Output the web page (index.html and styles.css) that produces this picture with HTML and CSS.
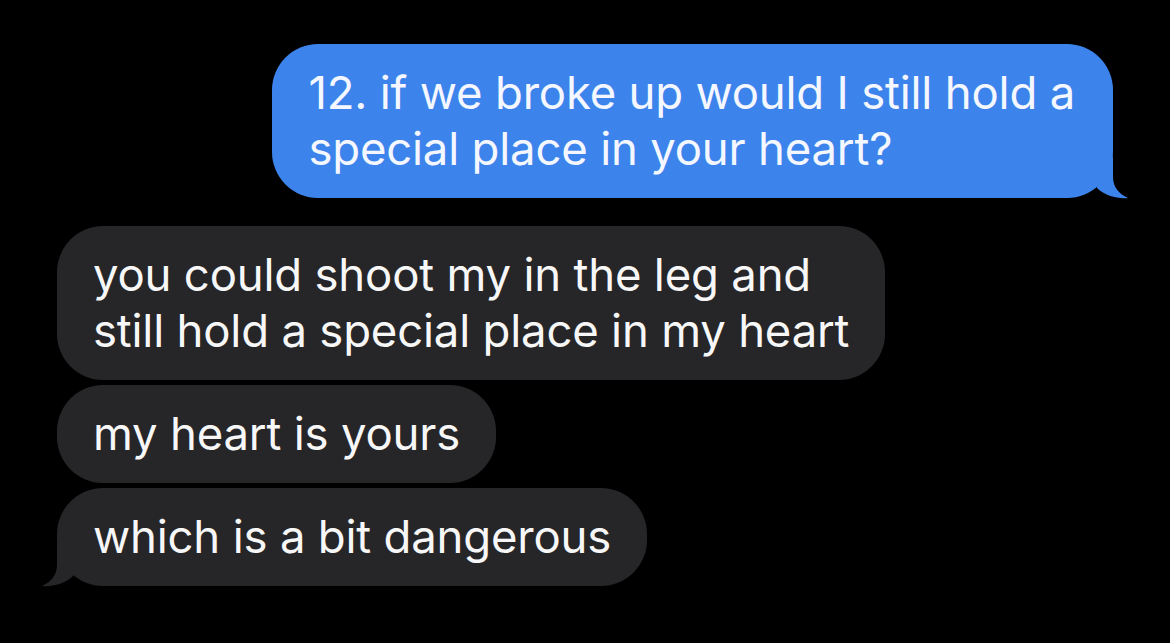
FILE: index.html
```html
<!DOCTYPE html>
<html>
<head>
<meta charset="utf-8">
<link rel="stylesheet" href="styles.css">
</head>
<body>
<main class="thread">
  <div class="bubble sent">
    <p class="text">12. if we broke up would I still hold a<br>special place in your heart?</p>
    <svg class="tail tail-sent" viewBox="0 0 32 42" width="32" height="42" aria-hidden="true"><path d="M0 0 H16 V20 C16 30 22 37 31 41 C21 42 8 39 0 31 Z"/></svg>
  </div>
  <div class="group">
    <div class="bubble recv">
      <p class="text">you could shoot my in the leg and<br>still hold a special place in my heart</p>
    </div>
    <div class="bubble recv">
      <p class="text">my heart is yours</p>
    </div>
    <div class="bubble recv">
      <p class="text">which is a bit dangerous</p>
      <svg class="tail tail-recv" viewBox="0 0 32 42" width="32" height="42" aria-hidden="true"><path d="M32 0 H16 V20 C16 30 10 37 1 41 C11 42 24 39 32 31 Z"/></svg>
    </div>
  </div>
</main>
</body>
</html>
```

FILE: styles.css
```css
html, body {
  margin: 0;
  padding: 0;
  background: #000;
}

body {
  width: 1170px;
  height: 643px;
  overflow: hidden;
  font-family: "Inter", "Liberation Sans", sans-serif;
}

.thread {
  display: flex;
  flex-direction: column;
  padding: 44px 57px 0 57px;
}

.bubble {
  position: relative;
  width: fit-content;
  border-radius: 46px;
  padding: 21px 36px 21px 36px;
}

.text {
  margin: 0;
  font-size: 45.5px;
  line-height: 56px;
  white-space: nowrap;
  letter-spacing: -0.2px;
}

.sent {
  align-self: flex-end;
  background: #3c84eb;
  color: #f4f7ff;
  padding-right: 38px;
}

.group {
  display: flex;
  flex-direction: column;
  gap: 5px;
  margin-top: 28px;
}

.recv {
  background: #262629;
  color: #f7f7f7;
}

.tail {
  position: absolute;
  bottom: -1px;
}

.tail-sent {
  right: -16px;
  fill: #3c84eb;
}

.tail-recv {
  left: -16px;
  fill: #262629;
}
```
